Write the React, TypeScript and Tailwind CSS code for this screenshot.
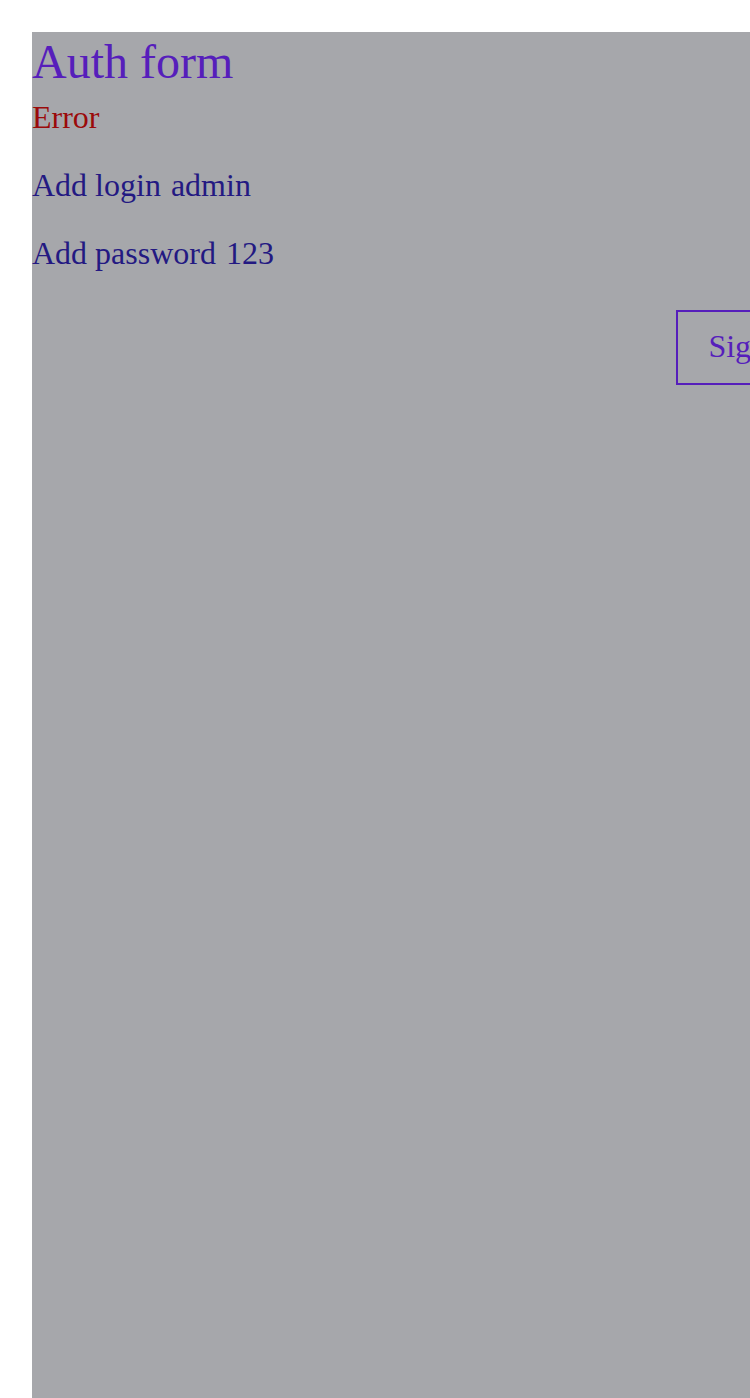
import { useState } from 'react';

const serif = { fontFamily: '"Liberation Serif", "Times New Roman", serif' };

export default function App() {
  const [login] = useState('admin');
  const [password] = useState('123');
  const [error] = useState('Error');

  return (
    <div className="h-screen w-screen overflow-hidden bg-white" style={serif}>
      <div className="ml-8 mt-8 flex min-h-screen w-[800px] flex-col bg-[#a6a7ab]">
        <h1 className="text-[48px] leading-[60px] text-[#561ebb]">Auth form</h1>

        {error && <p className="mt-[5px] text-[32px] leading-[40px] text-[#9b0a0a]">{error}</p>}

        {/* Fields */}
        <div className="mt-[28px] flex flex-col gap-[28px] text-[32px] leading-[40px] text-[#231982]">
          <div className="flex gap-[10px]">
            <span>Add login</span>
            <span>{login}</span>
          </div>
          <div className="flex gap-[10px]">
            <span>Add password</span>
            <span>{password}</span>
          </div>
        </div>

        <div className="mt-[37px] flex justify-end">
          <button className="border-2 border-[#561ebb] px-[30px] pb-[15px] pt-[12px] text-[32px] leading-[44px] text-[#561ebb]">
            Sign in
          </button>
        </div>
      </div>
    </div>
  );
}
